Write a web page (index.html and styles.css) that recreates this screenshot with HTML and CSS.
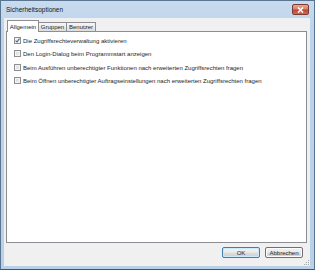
FILE: index.html
```html
<!DOCTYPE html>
<html>
<head>
<meta charset="utf-8">
<link rel="stylesheet" href="styles.css">
</head>
<body>
<div class="window">
  <div class="titlebar">
    <span class="title">Sicherheitsoptionen</span>
    <div class="close">
      <svg width="7" height="6" viewBox="0 0 7 6"><path d="M1 0.5 L6 5.5 M6 0.5 L1 5.5" stroke="#fff" stroke-width="1.6"/></svg>
    </div>
  </div>
  <div class="client">
    <div class="tabs">
      <div class="tab active">Allgemein</div>
      <div class="tab">Gruppen</div>
      <div class="tab">Benutzer</div>
    </div>
    <div class="panel">
      <div class="row"><span class="cb checked"><svg width="5" height="5" viewBox="0 0 5 5"><path d="M0.6 2.6 L2 4 L4.5 0.6" fill="none" stroke="#4a5f97" stroke-width="1.1"/></svg></span><span>Die Zugriffsrechteverwaltung aktivieren</span></div>
      <div class="row"><span class="cb"></span><span>Den Login-Dialog beim Programmstart anzeigen</span></div>
      <div class="row"><span class="cb"></span><span>Beim Ausführen unberechtigter Funktionen nach erweiterten Zugriffsrechten fragen</span></div>
      <div class="row"><span class="cb"></span><span>Beim Öffnen unberechtigter Auftragseinstellungen nach erweiterten Zugriffsrechten fragen</span></div>
    </div>
    <div class="buttons">
      <div class="btn default">OK</div>
      <div class="btn">Abbrechen</div>
    </div>
    <svg class="grip" width="7" height="7" viewBox="0 0 7 7">
      <g fill="#a8a8a8">
        <rect x="5" y="1" width="1" height="1"/>
        <rect x="3" y="3" width="1" height="1"/><rect x="5" y="3" width="1" height="1"/>
        <rect x="1" y="5" width="1" height="1"/><rect x="3" y="5" width="1" height="1"/><rect x="5" y="5" width="1" height="1"/>
      </g>
    </svg>
  </div>
</div>
</body>
</html>
```
FILE: styles.css
```css
* { box-sizing: border-box; }
html, body { margin: 0; padding: 0; background: #ffffff; }
body { font-family: "Liberation Sans", Arial, sans-serif; color: #1e1e1e; }

.window {
  width: 315px;
  height: 270px;
  border: 1px solid #5a7590;
  border-bottom-color: #2f5a75;
  background: linear-gradient(180deg, #c8dbef 0%, #bed4ec 10%, #b9d0e9 100%);
  padding: 0 4px 3px 3px;
  display: flex;
  flex-direction: column;
}

.titlebar {
  height: 17px;
  display: flex;
  align-items: flex-start;
}
.title {
  font-size: 6.5px;
  padding-left: 2px;
  margin-top: 5px;
  color: #141414;
}
.close {
  margin-left: auto;
  margin-top: 3px;
  margin-right: 1px;
  width: 17px;
  height: 11px;
  border: 1px solid #7e3a34;
  border-radius: 2px;
  background: linear-gradient(180deg, #e8a595 0%, #d7826d 45%, #c2452f 55%, #cf6a4f 100%);
  display: flex;
  align-items: center;
  justify-content: center;
}

.client {
  position: relative;
  flex: 1;
  background: #f0f0f0;
  padding: 2px 3px 8px 2px;
  display: flex;
  flex-direction: column;
  font-size: 6px;
}

.tabs {
  display: flex;
  height: 11px;
  padding-left: 1px;
  position: relative;
  z-index: 1;
}
.tab {
  margin-top: 2px;
  height: 10px;
  padding: 0 2px;
  border: 1px solid #8c8e94;
  border-left: none;
  background: linear-gradient(180deg, #f6f6f6 0%, #ebebeb 50%, #dcdcdc 100%);
  display: flex;
  align-items: center;
  justify-content: center;
}
.tab:nth-child(2) { width: 28px; }
.tab:nth-child(3) { width: 29px; }
.tab.active {
  margin-top: 0;
  height: 12px;
  width: 32px;
  border-left: 1px solid #8c8e94;
  border-bottom: none;
  background: #ffffff;
}

.panel {
  flex: 1;
  background: #ffffff;
  border: 1px solid #8c8e94;
  padding: 4px 7px 0 7px;
  display: flex;
  flex-direction: column;
  gap: 4px;
}
.row {
  height: 9px;
  display: flex;
  align-items: center;
  gap: 2px;
  white-space: nowrap;
}
.row:nth-child(3) { margin-top: 1px; }
.cb {
  width: 7px;
  height: 7px;
  border: 1px solid #8f8f8f;
  background: linear-gradient(135deg, #d6d6d6 0%, #f2f2f2 100%);
  box-shadow: inset 0 0 0 1px #f3f3f3;
  display: flex;
  align-items: center;
  justify-content: center;
  flex: none;
}
.cb.checked { background: linear-gradient(135deg, #e4e9f1 0%, #fafbfd 100%); }

.buttons {
  margin-top: 4px;
  height: 11px;
  display: flex;
  justify-content: flex-end;
  gap: 5px;
  padding-right: 4px;
}
.btn {
  width: 38px;
  height: 11px;
  border: 1px solid #707070;
  border-radius: 2px;
  background: linear-gradient(180deg, #f2f2f2 0%, #ebebeb 45%, #dddddd 55%, #cfcfcf 100%);
  box-shadow: inset 0 0 0 1px #fbfbfb;
  display: flex;
  align-items: center;
  justify-content: center;
  font-size: 6px;
}
.btn.default {
  border-color: #3c7fb1;
  box-shadow: inset 0 0 0 1px #cdeafb;
}

.grip {
  position: absolute;
  right: 0;
  bottom: 0;
}
```
